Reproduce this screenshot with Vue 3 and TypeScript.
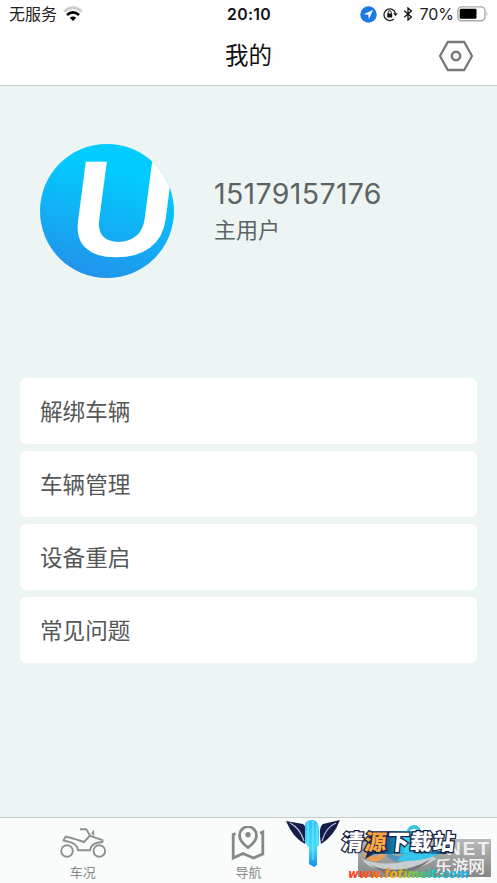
<script setup lang="ts">
interface Tab { label: string; icon: 'bike' | 'map' | 'user' }

const phone: string = '15179157176'
const role: string = '主用户'
const actions: string[] = ['解绑车辆', '车辆管理', '设备重启', '常见问题']
const tabs: Tab[] = [
  { label: '车况', icon: 'bike' },
  { label: '导航', icon: 'map' },
  { label: '', icon: 'user' },
]
</script>

<template>
  <div class="screen">
    <header class="top">
      <div class="status">
        <div class="side">
          <span class="carrier">无服务</span>
          <svg class="wifi" width="20" height="16" viewBox="0 0 20 16" fill="none">
            <path d="M1.2 5.6Q10-2.2 18.8 5.6" stroke="#ccc" stroke-width="2.6" />
            <path d="M4 9Q10 3.6 16 9" stroke="#000" stroke-width="2.6" />
            <path d="M6.8 11.8Q10 9.4 13.2 11.8L10 15Z" fill="#000" />
          </svg>
        </div>
        <span class="clock">20:10</span>
        <div class="side right">
          <svg width="17" height="17" viewBox="0 0 17 17">
            <circle cx="8.5" cy="8.5" r="8.2" fill="#1c7be0" />
            <path d="M13 4L3.8 8.3L8.3 8.7L8.8 13.2Z" fill="#fff" />
          </svg>
          <svg class="lock" width="15" height="15" viewBox="0 0 15 15" fill="none">
            <path d="M10.8 12A5.8 5.8 0 1 1 12.5 6.6" stroke="#222" stroke-width="1.3" />
            <path d="M10.2 6.2H14.8L12.5 9.3Z" fill="#222" />
            <rect x="4.2" y="6.6" width="5" height="4" rx=".5" fill="#111" />
            <path d="M5.2 7V5.3a1.5 1.5 0 0 1 3 0V7" stroke="#111" />
          </svg>
          <svg class="bt" width="10" height="14" viewBox="0 0 10 14" fill="none" stroke="#111" stroke-width="1.3">
            <path d="M1.2 3.8L8.4 10L5 13V1L8.4 4L1.2 10.2" />
          </svg>
          <span class="percent">70%</span>
          <svg width="32" height="16" viewBox="0 0 32 16">
            <rect x=".9" y=".9" width="27" height="13.8" rx="3.6" fill="#fff" stroke="#aaa" stroke-width="1.4" />
            <rect x="2.7" y="2.8" width="16.8" height="10" rx="1.3" fill="#000" />
            <path d="M29.6 5.3Q31.4 7.8 29.6 10.3Z" fill="#aaa" />
          </svg>
        </div>
      </div>
      <div class="nav">
        <h1>我的</h1>
        <svg class="settings" width="36" height="32" viewBox="0 0 36 32" fill="none" stroke="#777">
          <path d="M9.8 2H26.2L34 16L26.2 30H9.8L2 16Z" stroke-width="2.3" stroke-linejoin="round" />
          <circle cx="18" cy="16" r="4.2" stroke-width="2.5" />
        </svg>
      </div>
    </header>

    <main>
      <section class="profile">
        <svg class="avatar" width="134" height="134" viewBox="0 0 134 134">
          <defs>
            <linearGradient id="sky" x1=".65" y1=".1" x2=".4" y2="1">
              <stop offset=".12" stop-color="#02cbff" />
              <stop offset=".55" stop-color="#11b1f5" />
              <stop offset="1" stop-color="#2193eb" />
            </linearGradient>
            <clipPath id="disc"><circle cx="67" cy="67" r="67" /></clipPath>
          </defs>
          <circle cx="67" cy="67" r="67" fill="url(#sky)" />
          <g clip-path="url(#disc)">
            <text class="mark" transform="translate(24.8 112.4) skewX(-7.5) scale(1.06 1)">U</text>
          </g>
        </svg>
        <div class="identity">
          <div class="phone">{{ phone }}</div>
          <div class="role">{{ role }}</div>
        </div>
      </section>
      <nav class="actions">
        <button v-for="item in actions" :key="item" type="button">{{ item }}</button>
      </nav>
    </main>

    <footer class="tabs">
      <div v-for="tab in tabs" :key="tab.icon" class="tab">
        <svg v-if="tab.icon === 'bike'" width="48" height="36" viewBox="0 0 48 36" fill="none" stroke="#8c9090" stroke-width="1.9">
          <circle cx="8" cy="25" r="5.8" />
          <circle cx="40.3" cy="25" r="5.8" />
          <path d="M21 3.2H27.2L31 9.5L25 16Q18 13.5 6.8 10.5L4.4 14.5L12 16.3Q18.5 18.5 19 24.2H31Q32 16.5 43.5 16V14.2L31 9.8" stroke-linejoin="round" />
          <path d="M34.6 4.5V9.5L32.8 7Z" fill="#8c9090" stroke-width="1" />
        </svg>
        <svg v-else-if="tab.icon === 'map'" width="34" height="36" viewBox="0 0 34 36" fill="none" stroke="#858989">
          <path d="M4.5 7.5L2.2 8.5V32L12 27.5L22.5 32L31.8 28V6L29 7.3" stroke-width="2.8" />
          <path d="M17 21.5Q8.5 15.5 8.5 9.2A8.5 8.5 0 0 1 25.5 9.2Q25.5 15.5 17 21.5Z" stroke-width="2.8" />
          <circle cx="17" cy="8.8" r="2.7" fill="#858989" stroke="none" />
        </svg>
        <svg v-else width="34" height="36" viewBox="0 0 34 36" fill="none" stroke="#35c4dc" stroke-width="2.5">
          <circle cx="17" cy="8" r="6.5" />
          <path d="M5 29Q5 17 17 17T29 29" />
        </svg>
        <span>{{ tab.label }}</span>
      </div>
    </footer>

    <svg class="stamp" width="217" height="73" viewBox="0 0 217 73">
      <defs>
        <linearGradient id="silver" x2="0" y2="1">
          <stop stop-color="#b8baba" /><stop offset="1" stop-color="#858787" />
        </linearGradient>
        <linearGradient id="wing" x2="0" y2="1">
          <stop stop-color="#35bfff" /><stop offset=".6" stop-color="#45dbfb" /><stop offset="1" stop-color="#1889ef" />
        </linearGradient>
        <linearGradient id="banner">
          <stop stop-color="#17204a" /><stop offset=".3" stop-color="#126f9d" /><stop offset=".6" stop-color="#32dafa" /><stop offset="1" stop-color="#142b60" />
        </linearGradient>
        <linearGradient id="rainbow" gradientUnits="userSpaceOnUse" x1="68" y1="0" x2="189" y2="0">
          <stop stop-color="#ff3a25" /><stop offset=".2" stop-color="#ff5b18" /><stop offset=".38" stop-color="#ffae13" />
          <stop offset=".54" stop-color="#75ce43" /><stop offset=".68" stop-color="#16c9ac" /><stop offset="1" stop-color="#20aef3" />
        </linearGradient>
      </defs>
      <path d="M78 29H211V67H78Z" fill="url(#silver)" />
      <path d="M85 44Q94 54 104 44" fill="none" stroke="#ed9e55" stroke-width="5" />
      <path d="M108 44Q118 54 128 44" fill="none" stroke="#5195bf" stroke-width="5" />
      <path d="M82 49Q110 60 149 44L157 49Q128 66 97 59Q86 56 82 49Z" fill="#c6cecf" />
      <path d="M90 55Q120 67 151 49Q127 70 104 63Z" fill="#747878" />
      <path d="M117 51Q128 35 153 39L160 43Q146 52 117 51Z" fill="#36c5ec" />
      <circle cx="134" cy="22" r="6" fill="none" stroke="#38c6dd" stroke-width="2" />
      <text class="net" x="167" y="45" textLength="42">NET</text>
      <text class="site" x="155" y="62.5" textLength="50">乐游网</text>

      <path d="M6 11L23 14Q28 17 25 34Q13 28 6 11Z" fill="#141d49" />
      <path d="M60 10L43 14Q38 17 41 34Q54 26 60 10Z" fill="#141d49" />
      <path d="M10 13Q20 18 24 31M56 13Q46 17 42 31" fill="none" stroke="#b9c6d9" stroke-width="1.2" />
      <path d="M25 15Q25 10 33 10Q39 11 39 20V35Q37 36 37 38V55L34 57L29 54V37Q26 35 25 31Z" fill="url(#wing)" />
      <path d="M28 12V35M33 11V50M37 14V34" fill="none" stroke="#73f0ff" />

      <path d="M88 41H168L166 44H94L85 49Z" fill="url(#banner)" />
      <path d="M108 21H143L147 43H96Z" fill="url(#banner)" />
      <g class="brand" transform="translate(61 40) skewX(-6)">
        <text textLength="113"><tspan>清</tspan><tspan class="orange">源</tspan><tspan>下载站</tspan></text>
      </g>
      <text class="url" x="68" y="68" textLength="121" lengthAdjust="spacingAndGlyphs">www.fotimeit.com</text>
    </svg>
  </div>
</template>

<style>
body { margin: 0; background: #edf5f4; }
</style>

<style scoped>
.screen {
  position: relative;
  display: flex;
  flex-direction: column;
  height: 883px;
  overflow: hidden;
  background: #edf5f4;
  font-family: Inter, "Noto Sans CJK SC", sans-serif;
}
.top { box-sizing: border-box; height: 86px; background: #fefefe; border-bottom: 1px solid #c9cdcd; }
.status { display: grid; grid-template-columns: 1fr auto 1fr; align-items: center; height: 28px; padding: 0 8px 0 9px; }
.side { display: flex; align-items: center; line-height: 20px; }
.right { justify-content: flex-end; }
.carrier { font-size: 16px; color: #222; }
.wifi { margin-left: 6px; }
.clock { font-size: 15.8px; font-weight: 600; letter-spacing: .3px; color: #111; }
.lock { margin-left: 6px; }
.bt { margin-left: 5px; }
.percent { margin: 0 3px 0 6px; font-size: 16px; line-height: 20px; color: #222; }
.nav { display: grid; grid-template-columns: 1fr auto 1fr; align-items: center; height: 56px; padding: 0 23px; }
h1 { grid-column: 2; margin: 0; font-size: 23.5px; font-weight: 400; line-height: 34px; color: #111; }
.settings { justify-self: end; }
main { flex: 1; }
.profile { display: flex; align-items: center; height: 134px; padding: 58px 40px 0; }
.mark { font: 700 137px "Liberation Sans", sans-serif; fill: #fff; }
.identity { margin-left: 40px; color: #5c6463; }
.phone { font-size: 28.5px; line-height: 36px; letter-spacing: .35px; padding-top: 2px; }
.role { font-size: 22px; line-height: 36px; }
.actions { display: flex; flex-direction: column; gap: 7px; padding: 100px 20px 0; }
button {
  height: 66px;
  padding: 0 20px;
  border: 0;
  border-radius: 6px;
  background: #fff;
  color: #555757;
  font: 400 22.6px/34px "Noto Sans CJK SC", sans-serif;
  text-align: left;
}
.tabs { box-sizing: border-box; display: grid; grid-template-columns: repeat(3, 1fr); height: 66px; border-top: 1px solid #c3cbcb; background: #fafcfb; }
.tab { display: flex; flex-direction: column; align-items: center; padding-top: 8px; }
.tab svg { height: 36px; }
.tab span { font-size: 13px; line-height: 20px; color: #858989; }
.stamp { position: absolute; left: 280px; top: 810px; }
.net { font: 700 19px "Liberation Sans", sans-serif; fill: #eee; }
.site { font: 500 16.7px "Noto Sans CJK SC", sans-serif; fill: #f5f5f5; }
.brand { font: 900 22px "Noto Sans CJK SC", sans-serif; fill: #fff; stroke: #151d43; stroke-width: 2.5px; paint-order: stroke; }
.orange { fill: #f8a544; }
.url { font: italic 700 13px "DejaVu Sans", sans-serif; fill: url(#rainbow); }
</style>
